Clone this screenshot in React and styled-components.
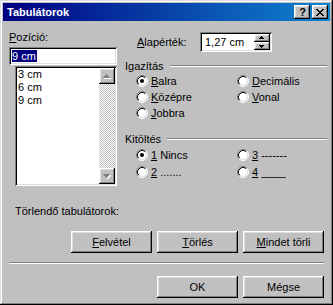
import styled, { createGlobalStyle } from "styled-components";

const GlobalStyle = createGlobalStyle`
  html, body {
    margin: 0;
    padding: 0;
    background: #c0c0c0;
  }
  body {
    font-family: "Liberation Sans", Arial, sans-serif;
    font-size: 11px;
    color: #000;
  }
`;

const raised = `
  box-shadow: inset -1px -1px #000, inset 1px 1px #fff,
    inset -2px -2px #808080, inset 2px 2px #dfdfdf;
`;

const sunken = `
  box-shadow: inset 1px 1px #808080, inset -1px -1px #fff,
    inset 2px 2px #000, inset -2px -2px #dfdfdf;
`;

function RadioDot({ checked }) {
  return (
    <svg width="12" height="12" viewBox="0 0 12 12">
      <circle cx="6" cy="6" r="5" fill="#fff" />
      <path d="M2.11 9.89 A5.5 5.5 0 0 1 9.89 2.11" fill="none" stroke="#808080" />
      <path d="M9.89 2.11 A5.5 5.5 0 0 1 2.11 9.89" fill="none" stroke="#fff" />
      <path d="M2.82 9.18 A4.5 4.5 0 0 1 9.18 2.82" fill="none" stroke="#000" />
      <path d="M9.18 2.82 A4.5 4.5 0 0 1 2.82 9.18" fill="none" stroke="#dfdfdf" />
      {checked && <circle cx="6" cy="6" r="2" fill="#000" />}
    </svg>
  );
}

function ScrollArrow({ down }) {
  const rows = down
    ? [[4, 6, 7], [5, 7, 5], [6, 8, 3], [7, 9, 1]]
    : [[7, 6, 1], [6, 7, 3], [5, 8, 5], [4, 9, 7]];
  return (
    <svg width="16" height="16" viewBox="0 0 16 16" shapeRendering="crispEdges">
      {rows.map(([x, y, w]) => (
        <rect key={"w" + y} x={x + 1} y={y + 1} width={w} height="1" fill="#fff" />
      ))}
      {rows.map(([x, y, w]) => (
        <rect key={"g" + y} x={x} y={y} width={w} height="1" fill="#808080" />
      ))}
    </svg>
  );
}

function SpinArrow({ down }) {
  const rows = down
    ? [[5, 3, 5], [6, 4, 3], [7, 5, 1]]
    : [[7, 2, 1], [6, 3, 3], [5, 4, 5]];
  return (
    <svg width="16" height="8" viewBox="0 0 16 8" shapeRendering="crispEdges">
      {rows.map(([x, y, w]) => (
        <rect key={y} x={x} y={y} width={w} height="1" fill="#000" />
      ))}
    </svg>
  );
}

function CloseGlyph() {
  return (
    <svg width="8" height="7" viewBox="0 0 8 7" shapeRendering="crispEdges">
      <path d="M0 0h2v1h-2zM6 0h2v1h-2zM1 1h2v1h-2zM5 1h2v1h-2zM2 2h4v1h-4zM3 3h2v1h-2zM2 4h4v1h-4zM1 5h2v1h-2zM5 5h2v1h-2zM0 6h2v1h-2zM6 6h2v1h-2z" fill="#000" />
    </svg>
  );
}

const Window = styled.div`
  width: 333px;
  height: 305px;
  box-sizing: border-box;
  padding: 3px;
  background: #c0c0c0;
  box-shadow: inset -1px -1px #000, inset 1px 1px #dfdfdf,
    inset -2px -2px #808080, inset 2px 2px #fff;
  display: flex;
  flex-direction: column;
`;

const TitleBar = styled.div`
  height: 18px;
  display: flex;
  align-items: center;
  padding: 0 2px 0 4px;
  background: linear-gradient(90deg, #000080, #1084d0);
  color: #fff;
  font-weight: bold;
`;

const Title = styled.span`
  flex: 1;
  line-height: 13px;
`;

const Caps = styled.div`
  display: flex;
  gap: 2px;
`;

const CapButton = styled.div`
  width: 16px;
  height: 14px;
  box-sizing: border-box;
  display: flex;
  align-items: center;
  justify-content: center;
  background: #c0c0c0;
  color: #000;
  font-weight: bold;
  font-size: 11px;
  line-height: 11px;
  padding-left: ${({ $nudge }) => $nudge || 0}px;
  ${raised}
`;

const Body = styled.div`
  flex: 1;
  display: flex;
  flex-direction: column;
  padding: 0 3px 0 6px;
`;

const Top = styled.div`
  display: flex;
  align-items: flex-start;
`;

const LeftCol = styled.div`
  width: 108px;
  padding-top: 10px;
  display: flex;
  flex-direction: column;
`;

const Label = styled.span`
  display: block;
  height: 13px;
  line-height: 13px;
  white-space: nowrap;
`;

const U = styled.span`
  text-decoration: underline;
`;

const TextField = styled.div`
  margin-top: 3px;
  height: 18px;
  box-sizing: border-box;
  padding: 3px 0 0 3px;
  background: #fff;
  line-height: 12px;
  ${sunken}
`;

const Selected = styled.span`
  background: #000080;
  color: #fff;
  padding: 0 1px 0 0;
`;

const ListBox = styled.div`
  margin: 1px 0 0 6px;
  width: 102px;
  height: 120px;
  box-sizing: border-box;
  padding: 2px;
  display: flex;
  background: #fff;
  ${sunken}
`;

const Items = styled.ul`
  flex: 1;
  margin: 0;
  padding: 0 0 0 1px;
  list-style: none;
`;

const Item = styled.li`
  height: 13px;
  line-height: 13px;
`;

const VScroll = styled.div`
  width: 16px;
  display: flex;
  flex-direction: column;
`;

const ScrollButton = styled.div`
  width: 16px;
  height: 16px;
  background: #c0c0c0;
  display: flex;
  ${raised}
`;

const Track = styled.div`
  flex: 1;
  background-color: #fff;
  background-image: repeating-conic-gradient(#c0c0c0 0% 25%, #fff 0% 50%);
  background-size: 2px 2px;
`;

const RightCol = styled.div`
  flex: 1;
  margin-left: 8px;
  padding-top: 11px;
  display: flex;
  flex-direction: column;
`;

const DefaultRow = styled.div`
  display: flex;
  align-items: center;
  height: 20px;
  padding-left: 12px;
`;

const DefaultLabel = styled(Label)`
  width: 63px;
`;

const Spin = styled.div`
  width: 72px;
  height: 20px;
  box-sizing: border-box;
  padding: 2px 2px 2px 5px;
  display: flex;
  align-items: center;
  background: #fff;
  ${sunken}
`;

const SpinValue = styled.span`
  flex: 1;
`;

const SpinButtons = styled.div`
  display: flex;
  flex-direction: column;
`;

const SpinButton = styled.div`
  width: 16px;
  height: 8px;
  display: flex;
  background: #c0c0c0;
  ${raised}
`;

const Group = styled.div`
  margin-top: ${({ $gap }) => $gap}px;
`;

const GroupHeader = styled.div`
  height: 14px;
  display: flex;
  align-items: center;
`;

const Etch = styled.div`
  flex: 1;
  margin-left: 6px;
  border-top: 1px solid #808080;
  border-bottom: 1px solid #fff;
`;

const RadioGrid = styled.div`
  display: grid;
  grid-template-columns: 101px 1fr;
  grid-auto-rows: ${({ $row }) => $row}px;
  padding-left: 11px;
`;

const RadioItem = styled.label`
  display: flex;
  align-items: center;
  gap: 3px;
  white-space: nowrap;
  grid-column: ${({ $col }) => $col};
`;

const DeleteLabel = styled(Label)`
  margin-top: 19px;
  padding-left: 6px;
`;

const ButtonRow = styled.div`
  display: flex;
  justify-content: flex-end;
  gap: 5px;
  margin-top: ${({ $gap }) => $gap}px;
  padding-right: 3px;
`;

const PushButton = styled.button`
  width: 81px;
  height: 22px;
  padding: 0;
  border: none;
  background: #c0c0c0;
  font: inherit;
  color: #000;
  ${raised}
`;

const Separator = styled.div`
  margin: 9px 3px 0 0;
  border-top: 1px solid #808080;
  border-bottom: 1px solid #fff;
`;

function Radio({ checked, col, children }) {
  return (
    <RadioItem $col={col}>
      <RadioDot checked={checked} />
      <span>{children}</span>
    </RadioItem>
  );
}

export default function App() {
  return (
    <>
      <GlobalStyle />
      <Window>
        <TitleBar>
          <Title>Tabulátorok</Title>
          <Caps>
            <CapButton $nudge={1}>?</CapButton>
            <CapButton>
              <CloseGlyph />
            </CapButton>
          </Caps>
        </TitleBar>
        <Body>
          <Top>
            <LeftCol>
              <Label>
                <U>P</U>ozíció:
              </Label>
              <TextField>
                <Selected>9 cm</Selected>
              </TextField>
              <ListBox>
                <Items>
                  <Item>3 cm</Item>
                  <Item>6 cm</Item>
                  <Item>9 cm</Item>
                </Items>
                <VScroll>
                  <ScrollButton>
                    <ScrollArrow />
                  </ScrollButton>
                  <Track />
                  <ScrollButton>
                    <ScrollArrow down />
                  </ScrollButton>
                </VScroll>
              </ListBox>
            </LeftCol>
            <RightCol>
              <DefaultRow>
                <DefaultLabel>
                  <U>A</U>lapérték:
                </DefaultLabel>
                <Spin>
                  <SpinValue>1,27 cm</SpinValue>
                  <SpinButtons>
                    <SpinButton>
                      <SpinArrow />
                    </SpinButton>
                    <SpinButton>
                      <SpinArrow down />
                    </SpinButton>
                  </SpinButtons>
                </Spin>
              </DefaultRow>
              <Group $gap={7}>
                <GroupHeader>
                  <span>Igazítás</span>
                  <Etch />
                </GroupHeader>
                <RadioGrid $row={16}>
                  <Radio checked col={1}>
                    <U>B</U>alra
                  </Radio>
                  <Radio col={2}>
                    <U>D</U>ecimális
                  </Radio>
                  <Radio col={1}>
                    <U>K</U>özépre
                  </Radio>
                  <Radio col={2}>
                    <U>V</U>onal
                  </Radio>
                  <Radio col={1}>
                    <U>J</U>obbra
                  </Radio>
                </RadioGrid>
              </Group>
              <Group $gap={11}>
                <GroupHeader>
                  <span>Kitöltés</span>
                  <Etch />
                </GroupHeader>
                <RadioGrid $row={17}>
                  <Radio checked col={1}>
                    <U>1</U> Nincs
                  </Radio>
                  <Radio col={2}>
                    <U>3</U> -------
                  </Radio>
                  <Radio col={1}>
                    <U>2</U> .......
                  </Radio>
                  <Radio col={2}>
                    <U>4</U> ____
                  </Radio>
                </RadioGrid>
              </Group>
            </RightCol>
          </Top>
          <DeleteLabel>Törlendő tabulátorok:</DeleteLabel>
          <ButtonRow $gap={13}>
            <PushButton>
              <U>F</U>elvétel
            </PushButton>
            <PushButton>
              <U>T</U>örlés
            </PushButton>
            <PushButton>
              <U>M</U>indet törli
            </PushButton>
          </ButtonRow>
          <Separator />
          <ButtonRow $gap={12}>
            <PushButton>OK</PushButton>
            <PushButton>Mégse</PushButton>
          </ButtonRow>
        </Body>
      </Window>
    </>
  );
}
